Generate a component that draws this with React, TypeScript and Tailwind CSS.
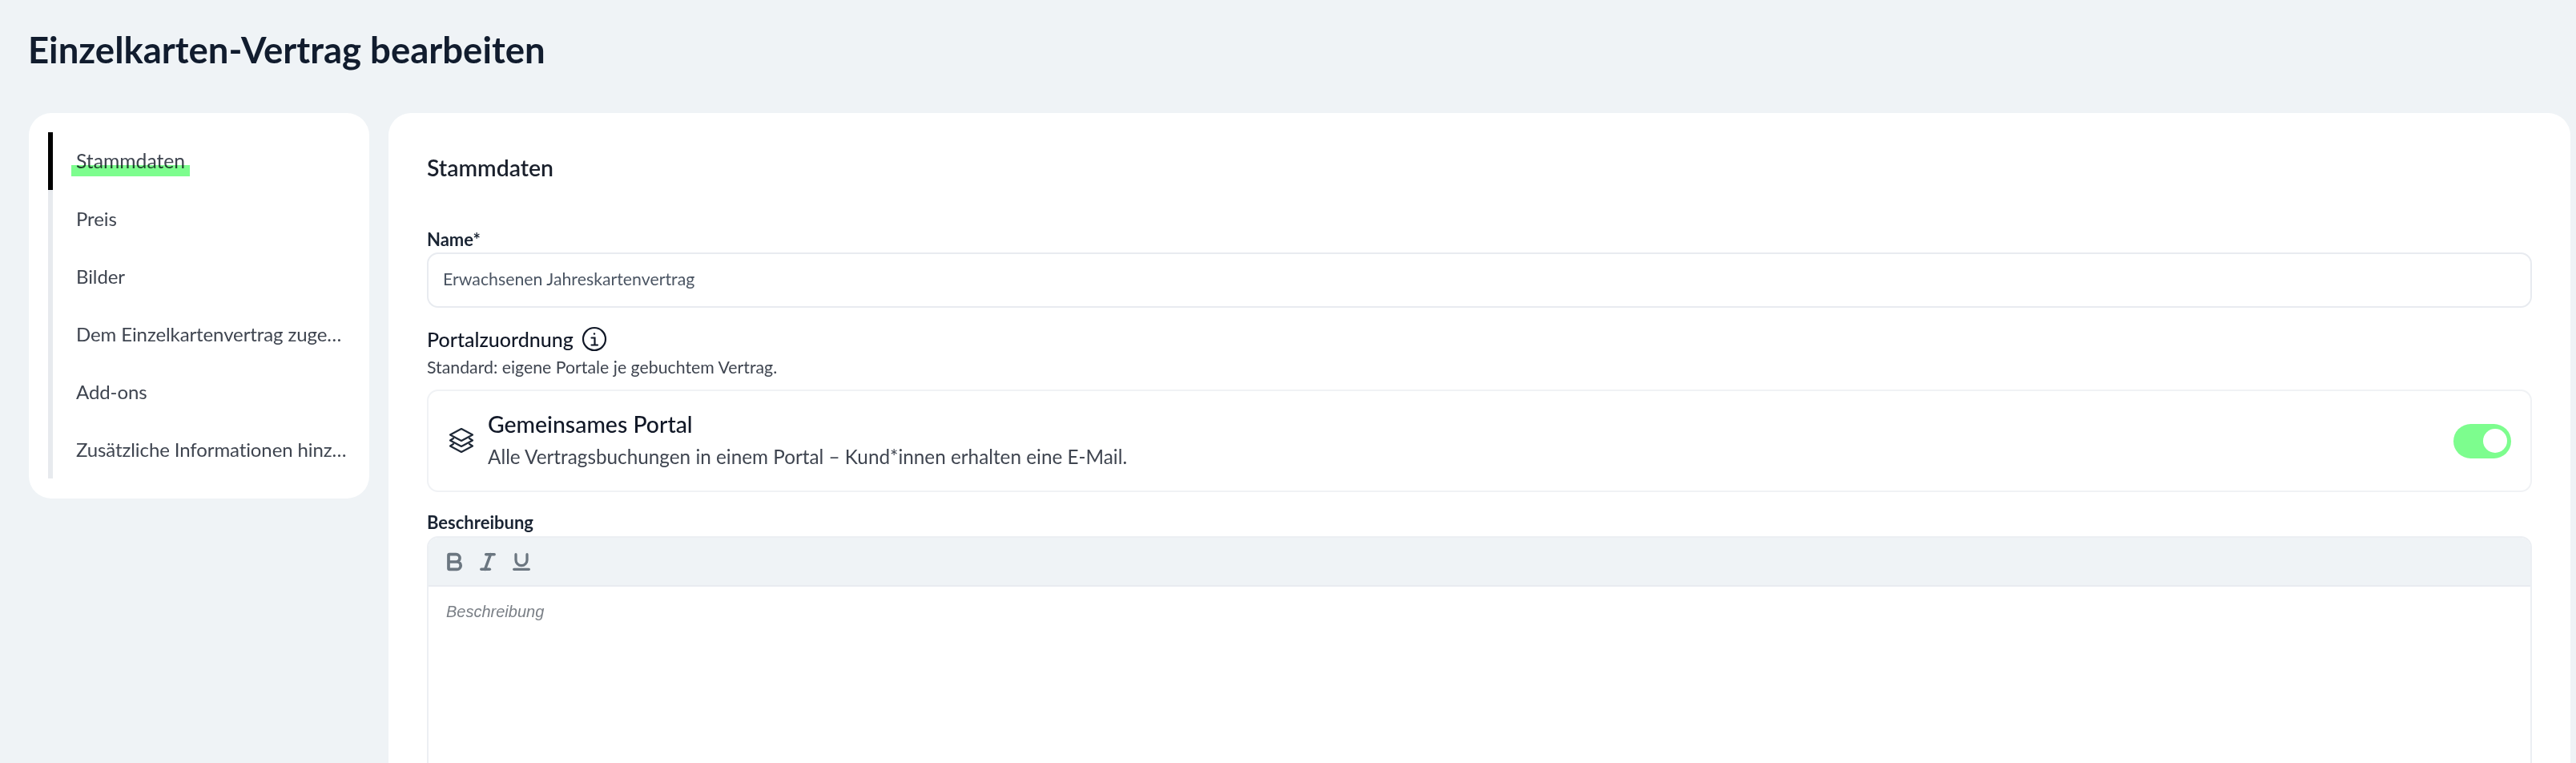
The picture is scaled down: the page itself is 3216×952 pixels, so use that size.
import { Bold, Italic, Underline } from 'lucide-react';

const navItems = [
  'Stammdaten',
  'Preis',
  'Bilder',
  'Dem Einzelkartenvertrag zugeordnete Leistungen',
  'Add-ons',
  'Zusätzliche Informationen hinzufügen',
];

function StackIcon() {
  return (
    <svg width="34" height="34" viewBox="0 0 34 34" fill="none" stroke="#1f2937" strokeWidth="2.2" strokeLinejoin="round" strokeLinecap="round">
      <path d="M17 2 L31 9.5 L17 17 L3 9.5 Z" />
      <path d="M7 14 L3 16.5 L17 24 L31 16.5 L27 14" />
      <path d="M7 21 L3 23.5 L17 31 L31 23.5 L27 21" />
    </svg>
  );
}

function InfoIcon() {
  return (
    <svg width="32" height="32" viewBox="0 0 32 32" fill="none" stroke="#111827" strokeWidth="2.2" strokeLinecap="round">
      <circle cx="16" cy="16" r="14" />
      <path d="M12.5 14.5 H16.5 V23 M12.5 23.5 H20" />
      <circle cx="16" cy="9.5" r="1.2" fill="#111827" stroke="none" />
    </svg>
  );
}

export default function App() {
  return (
    <div className="h-[952px] w-[3216px] overflow-hidden bg-[#eff3f6] font-['Lato',sans-serif]">
      <h1 className="pl-[35px] pt-[37px] h-[141px] text-[45.5px] leading-[50px] font-bold text-[#111c2e]">
        Einzelkarten-Vertrag bearbeiten
      </h1>
      <div className="flex items-start gap-6 pl-9 pr-[7px]">
        <aside className="w-[425px] shrink-0 rounded-[28px] bg-white pt-6 pb-[25px] pl-6 pr-6">
          <ul className="border-l-[6px] border-[#e7eaee]">
            {navItems.map((item, i) => (
              <li key={item} className={'relative flex h-[72px] items-center pl-[29px] text-[24px] text-[#3f4550] ' + (i === 0 ? '-ml-[6px] border-l-[6px] border-black' : '')}>
                <span className={'relative block truncate ' + (i === 0 ? 'text-[24.7px]' : 'max-w-[342px] tracking-[-0.1px]')}>{item}</span>
                {i === 0 && <span className="absolute left-[23px] top-[41px] h-[14px] w-[148px] bg-[#7dfd8e] mix-blend-multiply" />}
              </li>
            ))}
          </ul>
        </aside>
        <main className="h-[900px] flex-1 rounded-[28px] bg-white px-12 pt-[50px]">
          <h2 className="text-[28.4px] leading-[36px] font-semibold text-[#1a202c]">Stammdaten</h2>
          <label className="mt-[57px] block text-[22px] leading-[30px] font-bold text-[#1a2433]">Name*</label>
          <div className="mt-[1px] flex h-[69px] items-center rounded-[14px] border-2 border-[#e8ebf0] px-[18px] pb-[2px] text-[21.3px] text-[#4b5563]">
            Erwachsenen Jahreskartenvertrag
          </div>
          <div className="mt-[22px] flex items-center gap-[10px] text-[25px] leading-[34px] font-medium text-[#111827]">
            Portalzuordnung
            <InfoIcon />
          </div>
          <p className="mt-[3px] text-[21.3px] leading-[30px] text-[#3f4550]">Standard: eigene Portale je gebuchtem Vertrag.</p>
          <div className="mt-[13px] flex h-[128px] items-center rounded-[14px] border-2 border-[#f0f2f5] pl-6 pr-6">
            <StackIcon />
            <div className="ml-4 flex-1 pb-[3px]">
              <div className="text-[28.4px] leading-[40px] font-medium text-[#111827]">Gemeinsames Portal</div>
              <div className="mt-[3px] text-[24.3px] leading-[36px] text-[#3f4550]">Alle Vertragsbuchungen in einem Portal – Kund*innen erhalten eine E-Mail.</div>
            </div>
            <div className="flex h-[43px] w-[72px] items-center justify-end rounded-full bg-[#7dfd8e] pr-[5px]">
              <div className="h-[30px] w-[30px] rounded-full bg-white" />
            </div>
          </div>
          <label className="mt-[23px] block text-[22px] leading-[30px] font-bold text-[#1a2433]">Beschreibung</label>
          <div className="mt-[2px] h-[400px] rounded-[14px] border-2 border-[#eceff3]">
            <div className="flex h-[61px] items-center gap-[14px] rounded-t-[12px] border-b-2 border-[#e8ebf0] bg-[#eff3f6] pl-[18px] text-[#6b7680]">
              <Bold size={28} strokeWidth={3.2} />
              <Italic size={28} strokeWidth={3} />
              <Underline size={28} strokeWidth={2.8} />
            </div>
            <p className="pl-[22px] pt-[18px] font-['Liberation_Sans',sans-serif] text-[20px] italic leading-[26px] text-[#7b8087]">Beschreibung</p>
          </div>
        </main>
      </div>
    </div>
  );
}
